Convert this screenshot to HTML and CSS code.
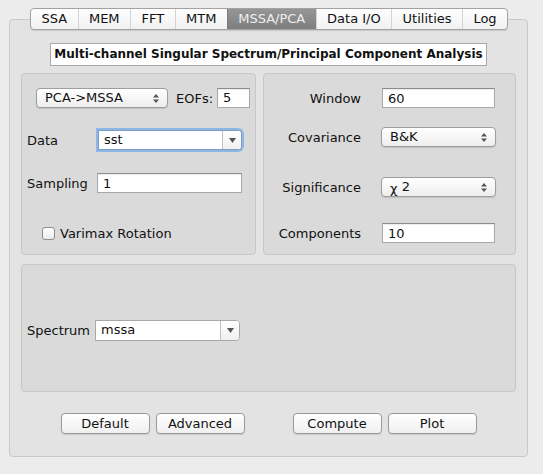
FILE: index.html
```html
<!DOCTYPE html>
<html lang="en">
<head>
    <meta charset="UTF-8">
    <title>MSSA/PCA</title>
    <link rel="stylesheet" href="styles.css">
</head>
<body>
    <div id="tabs">
        <span class="tab">SSA</span>
        <span class="tab">MEM</span>
        <span class="tab">FFT</span>
        <span class="tab">MTM</span>
        <span class="tab active">MSSA/PCA</span>
        <span class="tab">Data I/O</span>
        <span class="tab">Utilities</span>
        <span class="tab">Log</span>
    </div>
    <div id="box">
        <div class="title">Multi-channel Singular Spectrum/Principal Component Analysis</div>
        <div class="panels">
            <div class="panel left">
                <div class="row method-row">
                    <div class="popup method">PCA-&gt;MSSA
                        <svg class="updown" width="6" height="9" viewBox="0 0 6 9"><path d="M0 3.5 L3 0 L6 3.5 Z M0 5.5 L3 9 L6 5.5 Z" fill="#555"/></svg>
                    </div>
                    <span class="eofs">EOFs:</span>
                    <input class="field eof" value="5">
                </div>
                <div class="row data-row">
                    <span class="lbl data-lbl">Data</span>
                    <div class="combo focus">
                        <span class="combo-text">sst</span>
                        <span class="combo-btn"><svg width="7" height="5" viewBox="0 0 7 5"><path d="M0 0 L7 0 L3.5 5 Z" fill="#555"/></svg></span>
                    </div>
                </div>
                <div class="row sampling-row">
                    <span class="lbl samp-lbl">Sampling</span>
                    <input class="field samp" value="1">
                </div>
                <div class="row check-row">
                    <span class="checkbox"></span>
                    <span>Varimax Rotation</span>
                </div>
            </div>
            <div class="panel right">
                <div class="rrow win">
                    <span class="rlbl">Window</span>
                    <input class="field rfield" value="60">
                </div>
                <div class="rrow cov">
                    <span class="rlbl">Covariance</span>
                    <div class="popup rpop">B&amp;K
                        <svg class="updown" width="6" height="9" viewBox="0 0 6 9"><path d="M0 3.5 L3 0 L6 3.5 Z M0 5.5 L3 9 L6 5.5 Z" fill="#555"/></svg>
                    </div>
                </div>
                <div class="rrow sig">
                    <span class="rlbl">Significance</span>
                    <div class="popup rpop"><span class="chi">χ</span> 2
                        <svg class="updown" width="6" height="9" viewBox="0 0 6 9"><path d="M0 3.5 L3 0 L6 3.5 Z M0 5.5 L3 9 L6 5.5 Z" fill="#555"/></svg>
                    </div>
                </div>
                <div class="rrow comp">
                    <span class="rlbl">Components</span>
                    <input class="field rfield" value="10">
                </div>
            </div>
        </div>
        <div class="panel bottom">
            <div class="row">
                <span class="lbl spec-lbl">Spectrum</span>
                <div class="combo spec">
                    <span class="combo-text">mssa</span>
                    <span class="combo-btn"><svg width="7" height="5" viewBox="0 0 7 5"><path d="M0 0 L7 0 L3.5 5 Z" fill="#555"/></svg></span>
                </div>
            </div>
        </div>
        <div class="buttons">
            <div class="group">
                <button class="btn">Default</button>
                <button class="btn">Advanced</button>
            </div>
            <div class="group">
                <button class="btn">Compute</button>
                <button class="btn">Plot</button>
            </div>
        </div>
    </div>
</body>
</html>
```

FILE: styles.css
```css
body, html {
    margin: 0;
    padding: 0;
    background-color: #ececec;
    font-family: 'DejaVu Sans', sans-serif;
    font-size: 12px;
    color: #111111;
}
body {
    padding-top: 8px;
}
#tabs {
    position: relative;
    z-index: 2;
    display: flex;
    width: 478px;
    margin-left: 30px;
    height: 22px;
    box-sizing: border-box;
    border: 1px solid #a2a2a2;
    border-radius: 4px;
    background: linear-gradient(#ffffff, #f1f1f1);
    box-shadow: 0 1px 1px rgba(0, 0, 0, 0.12);
    overflow: hidden;
}
.tab {
    flex: auto;
    text-align: center;
    line-height: 20px;
    font-size: 13px;
    border-left: 1px solid #d4d4d4;
}
.tab:first-child {
    border-left: none;
}
.tab.active {
    background: linear-gradient(#969696, #7e7e7e);
    color: #eeeeee;
    border-left-color: #7a7a7a;
}
#box {
    margin: -11px 0 0 9px;
    width: 519px;
    box-sizing: border-box;
    padding: 23px 11px 22px 11px;
    background-color: #e3e3e3;
    border: 1px solid #c9c9c9;
    border-radius: 4px;
}
.title {
    width: 437px;
    height: 23px;
    box-sizing: border-box;
    margin: 0 auto;
    background: #ffffff;
    border: 1px solid #a9a9a9;
    font-weight: bold;
    font-size: 12px;
    text-align: center;
    line-height: 21px;
}
.panels {
    display: flex;
    gap: 7px;
    margin-top: 7px;
}
.panel {
    background-color: #dadada;
    border: 1px solid #c7c7c7;
    border-radius: 4px;
    box-sizing: border-box;
}
.panel.left {
    width: 235px;
    height: 182px;
    padding: 14px 0 0 5px;
}
.panel.right {
    width: 253px;
    height: 182px;
    padding-top: 14px;
}
.panel.bottom {
    margin-top: 9px;
    height: 128px;
    padding: 55px 0 0 5px;
}
.row {
    display: flex;
    align-items: center;
}
.method-row {
    margin-left: 9px;
}
.data-row {
    margin-top: 22px;
}
.sampling-row {
    margin-top: 23px;
}
.check-row {
    margin: 33px 0 0 15px;
    font-size: 13px;
}
.lbl {
    font-size: 13px;
}
.data-lbl {
    width: 71px;
}
.samp-lbl {
    width: 70px;
}
.spec-lbl {
    width: 68px;
}
.eofs {
    margin: 0 8px 0 8px;
    width: 33px;
    font-size: 13px;
}
.field {
    box-sizing: border-box;
    height: 20px;
    border: 1px solid #a8a8a8;
    border-top-color: #8c8c8c;
    background: #ffffff;
    font-family: 'DejaVu Sans', sans-serif;
    font-size: 13px;
    padding: 0 5px;
    margin: 0;
    color: #111111;
    box-shadow: inset 0 1px 1px rgba(0, 0, 0, 0.08);
}
.eof {
    width: 33px;
    margin-top: -1px;
}
.samp {
    width: 145px;
}
.popup {
    position: relative;
    box-sizing: border-box;
    height: 20px;
    line-height: 18px;
    padding-left: 8px;
    font-size: 13px;
    border: 1px solid #9e9e9e;
    border-radius: 4px;
    background: linear-gradient(#ffffff, #eeeeee);
    box-shadow: 0 1px 1px rgba(0, 0, 0, 0.12);
}
.method {
    width: 132px;
}
.updown {
    position: absolute;
    right: 8px;
    top: 5px;
}
.combo {
    display: flex;
    box-sizing: border-box;
    height: 20px;
    width: 144px;
    border: 1px solid #a8a8a8;
    border-radius: 0 4px 4px 0;
    background: #ffffff;
    font-size: 13px;
}
.combo.focus {
    box-shadow: 0 0 0 2px #8fb5e3;
    border-color: #7d9cc7;
}
.combo.spec {
    width: 145px;
    height: 21px;
}
.combo-text {
    flex: auto;
    padding-left: 5px;
    line-height: 18px;
}
.combo-btn {
    width: 18px;
    border-left: 1px solid #c2c2c2;
    background: linear-gradient(#ffffff, #f0f0f0);
    border-radius: 0 3px 3px 0;
    display: flex;
    align-items: center;
    justify-content: center;
}
.checkbox {
    width: 13px;
    height: 13px;
    box-sizing: border-box;
    border: 1px solid #8e8e8e;
    border-radius: 3px;
    background: linear-gradient(#ffffff, #ececec);
    margin-right: 5px;
}
.rrow {
    display: flex;
    align-items: center;
}
.rlbl {
    width: 97px;
    text-align: right;
    margin-right: 21px;
    font-size: 13px;
}
.rfield {
    width: 113px;
}
.rpop {
    width: 115px;
    margin-left: -1px;
}
.cov {
    margin-top: 19px;
}
.sig {
    margin-top: 30px;
}
.comp {
    margin-top: 26px;
}
.chi {
    position: relative;
    top: 2px;
}
.buttons {
    display: flex;
    justify-content: center;
    gap: 48px;
    margin-top: 21px;
}
.group {
    display: flex;
    gap: 6px;
}
.btn {
    width: 89px;
    height: 21px;
    box-sizing: border-box;
    border: 1px solid #9a9a9a;
    border-radius: 4px;
    background: linear-gradient(#ffffff, #f0f0f0);
    box-shadow: 0 1px 1px rgba(0, 0, 0, 0.12);
    font-family: 'DejaVu Sans', sans-serif;
    font-size: 13px;
    color: #111111;
    padding: 0;
}
```
